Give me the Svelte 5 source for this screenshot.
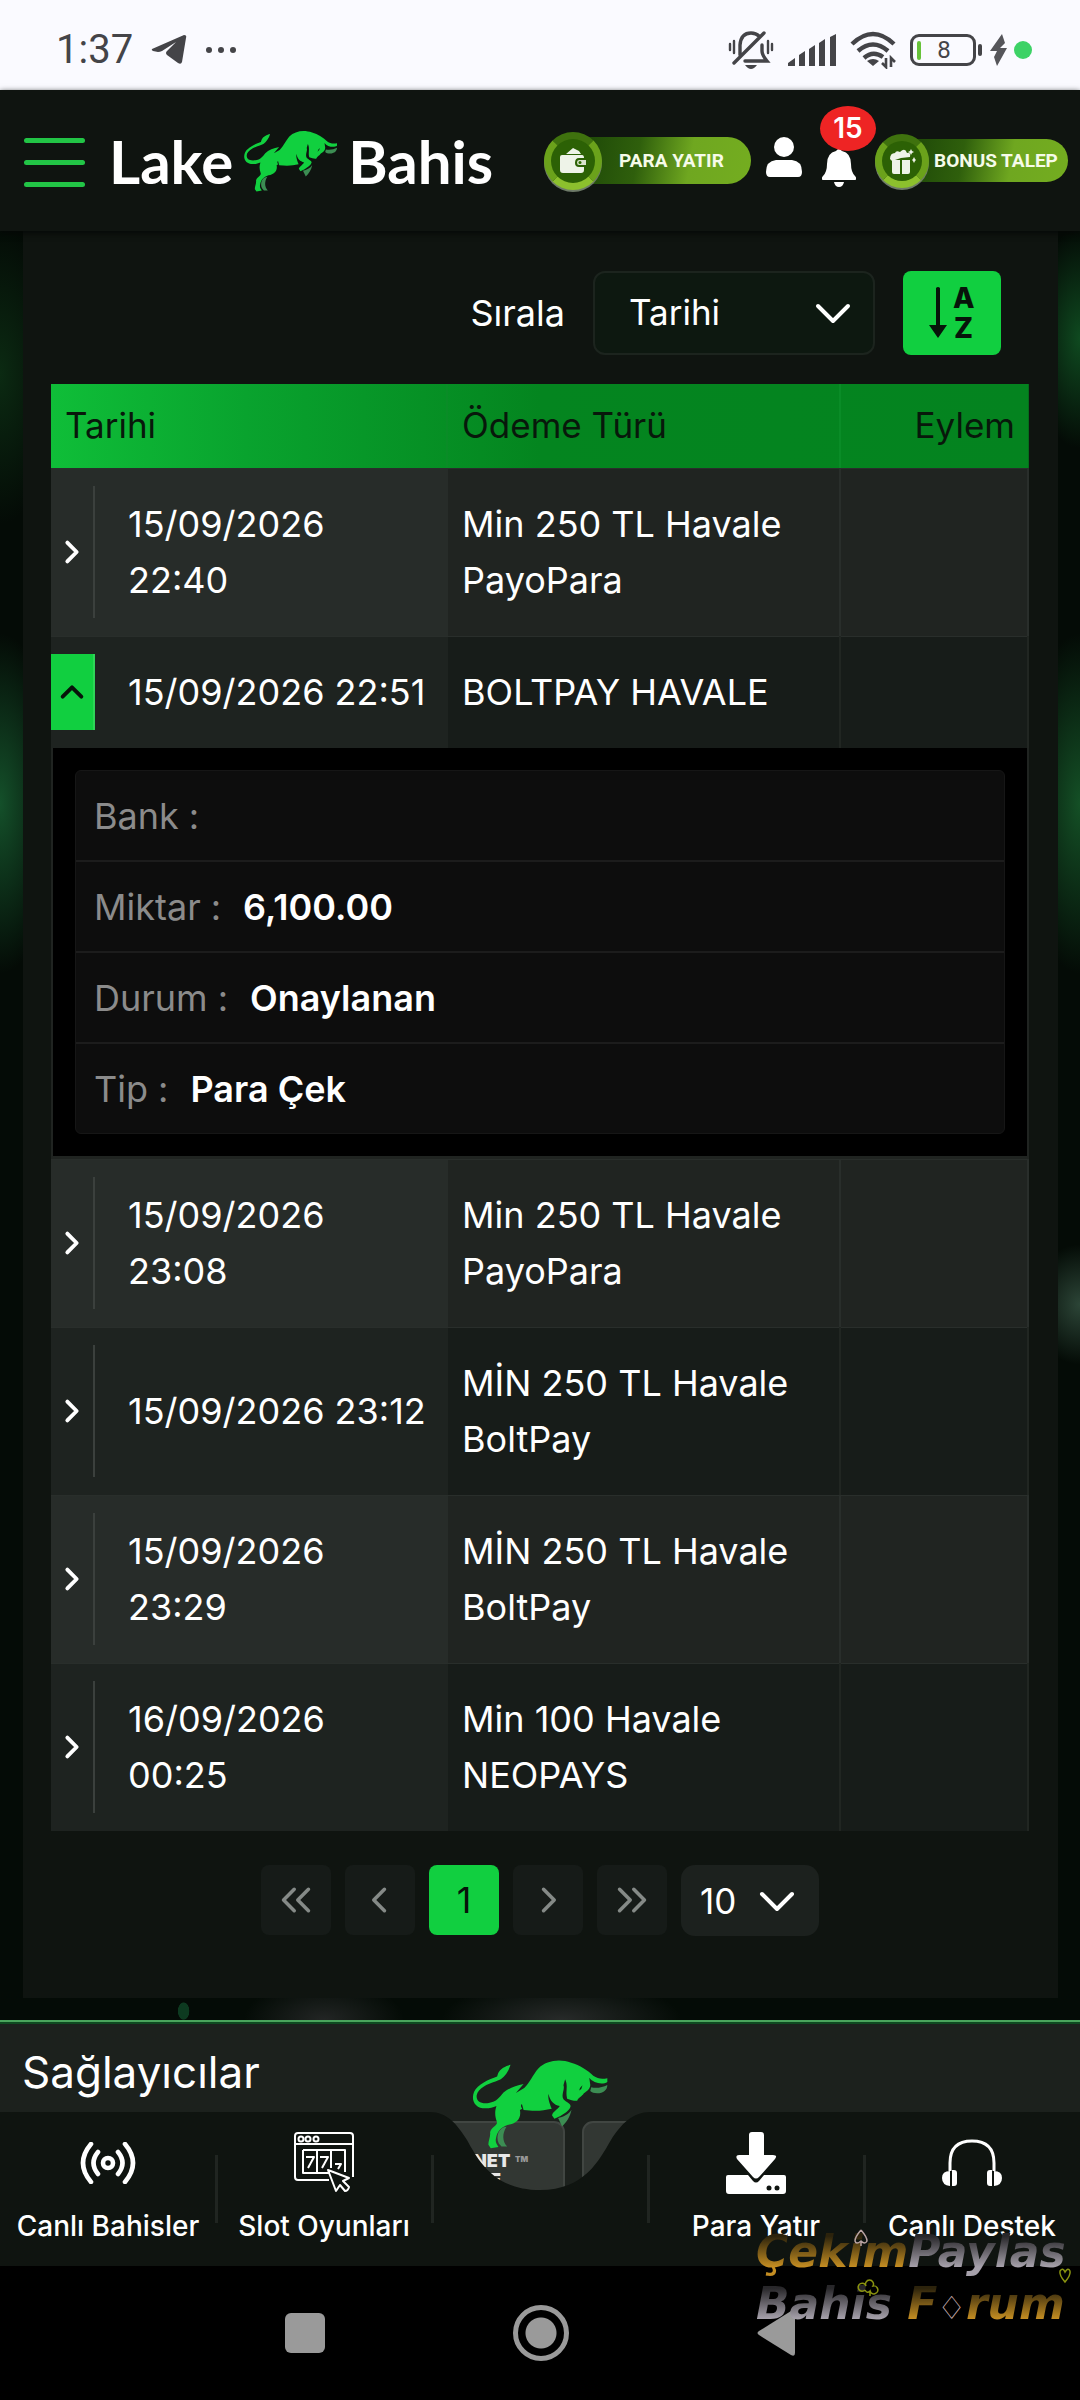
<script>
    let sortBy = $state('Tarihi');
    let pageSize = $state('10');
    let openRow = $state(1);

    const rows = [
        { date: '15/09/2026\n22:40', method: 'Min 250 TL Havale\nPayoPara' },
        {
            date: '15/09/2026 22:51',
            method: 'BOLTPAY HAVALE',
            details: [
                { label: 'Bank', value: '' },
                { label: 'Miktar', value: '6,100.00' },
                { label: 'Durum', value: 'Onaylanan' },
                { label: 'Tip', value: 'Para Çek' }
            ]
        },
        { date: '15/09/2026\n23:08', method: 'Min 250 TL Havale\nPayoPara' },
        { date: '15/09/2026 23:12', method: 'MİN 250 TL Havale\nBoltPay' },
        { date: '15/09/2026\n23:29', method: 'MİN 250 TL Havale\nBoltPay' },
        { date: '16/09/2026\n00:25', method: 'Min 100 Havale\nNEOPAYS' }
    ];

    function toggle(i) {
        openRow = openRow === i ? -1 : i;
    }
</script>

{#snippet bull()}
    <svg class="bull" viewBox="34 60 406 268" aria-hidden="true">
        <g fill="#11d03f">
            <path d="M149 77C136 80 118 88 112 102L109 112C85 120 50 136 40 158C30 184 44 207 74 207C88 207 96 204 107 200C101 218 103 232 108 246C112 258 92 262 88 278C90 292 82 304 83 316L90 326L113 322C106 312 103 306 106 294C110 276 120 263 142 256C168 252 182 236 177 212L184 208C178 200 180 196 183 194L188 212C224 216 246 214 272 208C268 198 260 180 262 164C268 186 278 196 296 200C288 212 274 218 273 228L280 238L298 230C310 222 324 214 328 202C330 192 316 190 307 180C299 166 312 150 307 138L312 120C322 140 312 158 318 178C328 182 340 185 348 184C352 174 362 172 368 162C378 156 388 148 387 136L384 116C396 132 424 138 438 128V117C424 120 410 120 396 110C380 94 356 78 330 71C296 58 256 64 232 88C216 106 206 132 190 146L165 161L188 134C164 138 142 148 128 160C116 174 108 188 84 191C58 194 46 184 48 168C52 148 80 134 104 127L120 120C134 110 144 94 149 77Z" />
        </g>
        <path d="M364 138Q362 150 354 154Q356 144 364 138Z" fill="#0a2510" />
        <g fill="#3c8d53">
            <path d="M137 262C114 264 104 290 114 312L122 321H139C124 306 124 282 137 262Z" />
            <path d="M331 211C322 226 306 232 291 236L303 261C316 248 327 232 331 211Z" />
            <path d="M390 144C406 148 424 144 438 137C438 152 426 162 408 162C398 161 392 160 387 155Z" />
        </g>
    </svg>
{/snippet}

{#snippet chevron(cls, d)}
    <svg class={cls} viewBox="0 0 36 36" fill="none" stroke="currentColor" stroke-width="4" stroke-linecap="round" stroke-linejoin="round" aria-hidden="true">
        <path {d} />
    </svg>
{/snippet}

<div class="screen">
    <div class="status">
        <span class="clock">1:37</span>
        <svg width="36" height="30" viewBox="0 0 36 30"><path d="M1 14L33 0Q36 0 35 3L31 27Q30 30 27 28L16 20Q14 18 16 16L25 7L11 16Q9 17 7 17L2 16Q0 15 1 14Z" fill="#444448" /></svg>
        <svg class="more" width="32" height="8" viewBox="0 0 32 8" fill="#444448"><circle cx="4" cy="4" r="3" /><circle cx="16" cy="4" r="3" /><circle cx="28" cy="4" r="3" /></svg>
        <div class="status-icons">
            <svg class="mute" width="46" height="40" viewBox="0 0 46 40" fill="none" stroke="#444448" stroke-width="3.4" stroke-linecap="round">
                <path d="M12 25V15Q13 3 23 3Q28 3 31 6M34 15V21Q34 25 39 31H17M6 33L36 3" />
                <path d="M2 14V20M6 11V23M44 14V20M40 11V23" stroke-width="2.4" />
                <path d="M17 35H29Q26 39 23 39Q20 39 17 35Z" fill="#444448" stroke="none" />
            </svg>
            <svg width="48" height="32" viewBox="0 0 48 32" fill="#444448"><path d="M0 32V29L7 24V32ZM11 32V21L17 17V32ZM21 32V15L27 11V32ZM31 32V9L37 5V32ZM42 32V3L48 0V32Z" /></svg>
            <svg width="46" height="38" viewBox="0 0 46 38" fill="none" stroke="#444448" stroke-width="4.4">
                <path d="M2 13Q23 -7 44 13M8 20Q23 7 38 20M14 27Q23 19 33 26" />
                <path d="M23 35L17 30Q23 26 29 30Z" fill="#444448" stroke="none" />
                <path d="M36 27V36L32 32M41 36V27L45 31" stroke-width="2.6" />
            </svg>
            <div class="battery"><i></i><span>8</span></div>
            <svg class="bolt" width="18" height="32" viewBox="0 0 18 32"><path d="M12 0L0 17H7L4 23L7 32L17 14H10L15 9Z" fill="#55555a" /></svg>
            <span class="dot"></span>
        </div>
    </div>

    <header>
        <button class="menu" aria-label="Menü"><i></i><i></i><i></i></button>
        <a class="logo" href="/">Lake{@render bull()}Bahis</a>
        <div class="actions">
            <a class="pill" href="/deposit">
                <span class="coin">
                    <svg viewBox="0 0 28 28"><path d="M7 7L14 1L20 4L22 7ZM3 8H23Q25 8 25 11H20Q16 11 16 16Q16 20 20 20H25V23Q25 26 22 26H4Q1 26 1 23V10Q1 8 3 8Z" fill="#eef3e8" /><path d="M20 13H27V18H20Q18 18 18 15.500Q18 13 20 13Z" fill="#d9e2cd" /><circle cx="21" cy="15.500" r="1.500" fill="#2d6a00" /></svg>
                </span>
                PARA YATIR
            </a>
            <button class="plain user" aria-label="Hesap">
                <svg width="36" height="42" viewBox="0 0 36 42" fill="#fff"><circle cx="18" cy="11" r="10" /><path d="M10 24H26Q36 25 36 36Q36 41 32 41H4Q0 41 0 36Q0 25 10 24Z" /></svg>
            </button>
            <button class="plain bell" aria-label="Bildirimler">
                <svg width="34" height="38" viewBox="0 0 34 38" fill="#fff"><path d="M14 2Q17 -2 20 2Q29 4 29 15Q29 23 33 27Q36 31 32 31H2Q-2 31 1 27Q5 23 5 15Q5 4 14 2ZM12 33H22Q21 38 17 38Q13 38 12 33Z" /></svg>
                <span class="badge">15</span>
            </button>
            <a class="pill bonus" href="/bonus">
                <span class="coin">
                    <svg viewBox="0 0 28 28" fill="#eef3e8"><path d="M4 13H12V27H6Q4 27 4 25ZM14 13H22V25Q22 27 20 27H14Z" /><path d="M2 12Q2 6 7 6Q8 3 12 5Q17 0 19 6Q23 5 22 10L13 11L4 14Z" /><path d="M23 2L24 4L26 5L24 6L23 8L22 6L20 5L22 4ZM26 10L27 12L28 13L27 14L26 16L25 14L24 13L25 12Z" /></svg>
                </span>
                BONUS TALEP
            </a>
        </div>
    </header>

    <main>
        <div class="panel">
            <div class="toolbar">
                <label for="sort">Sırala</label>
                <div class="select sort">
                    <select id="sort" bind:value={sortBy}>
                        <option>Tarihi</option>
                        <option>Ödeme Türü</option>
                    </select>
                    {@render chevron('arrow', 'M3 11L18 26L33 11')}
                </div>
                <button class="order" aria-label="A-Z sırala">
                    <svg width="46" height="54" viewBox="0 0 46 54" fill="#07140a">
                        <path d="M7 2Q9 0 11 2V39H18L9 52L0 39H7Z" />
                        <text x="24" y="22">A</text>
                        <text x="25" y="52">Z</text>
                    </svg>
                </button>
            </div>

            <table>
                <colgroup><col class="c1" /><col class="c2" /><col class="c3" /></colgroup>
                <thead>
                    <tr><th>Tarihi</th><th>Ödeme Türü</th><th class="right">Eylem</th></tr>
                </thead>
                <tbody>
                    {#each rows as row, i}
                        <tr class:even={i % 2 === 1}>
                            <td class="first">
                                <div class="date">
                                    <button class="expand" class:open={openRow === i} aria-label="Detay" onclick={() => toggle(i)}>
                                        {#if openRow === i}
                                            {@render chevron('mini', 'M6 24L18 12L30 24')}
                                        {:else}
                                            {@render chevron('mini', 'M12 6L24 18L12 30')}
                                        {/if}
                                    </button>
                                    <span class="lines">{row.date}</span>
                                </div>
                            </td>
                            <td class="method"><span class="lines">{row.method}</span></td>
                            <td></td>
                        </tr>
                        {#if openRow === i && row.details}
                            <tr>
                                <td class="detail" colspan="3">
                                    <dl>
                                        {#each row.details as item}
                                            <div>
                                                <dt>{item.label}<span>:</span></dt>
                                                <dd>{item.value}</dd>
                                            </div>
                                        {/each}
                                    </dl>
                                </td>
                            </tr>
                        {/if}
                    {/each}
                </tbody>
            </table>

            <div class="pager">
                <button aria-label="İlk">{@render chevron('step', 'M16 6L4 18L16 30M32 6L20 18L32 30')}</button>
                <button aria-label="Önceki">{@render chevron('step', 'M23 6L11 18L23 30')}</button>
                <button class="current">1</button>
                <button aria-label="Sonraki">{@render chevron('step', 'M13 6L25 18L13 30')}</button>
                <button aria-label="Son">{@render chevron('step', 'M4 6L16 18L4 30M20 6L32 18L20 30')}</button>
                <div class="select size">
                    <select aria-label="Sayfa boyutu" bind:value={pageSize}>
                        <option>10</option>
                        <option>20</option>
                    </select>
                    {@render chevron('arrow', 'M3 11L18 26L33 11')}
                </div>
            </div>
        </div>
    </main>

    <section class="providers"><h2>Sağlayıcılar</h2></section>

    <nav>
        <div class="bar">
            <i></i>
            <svg width="230" height="154" viewBox="0 0 230 154">
                <rect width="230" height="154" fill="#1c211d" />
                <g fill="#323733" stroke="#414642" stroke-width="2">
                    <rect x="-60" y="10" width="199" height="140" rx="10" />
                    <rect x="158" y="10" width="190" height="140" rx="10" />
                </g>
                <g class="brand"><text x="48" y="55">NET</text><text x="90" y="50" class="tm">TM</text><text x="65" y="74">E</text></g>
                <path d="M0 0H5C22 0 32 12 42 28C54 50 70 78 115 78C160 78 174 48 186 28C196 12 208 0 225 0H230V154H0Z" fill="#0f1410" />
            </svg>
            <i></i>
        </div>
        <a href="/live">
            <svg width="56" height="42" viewBox="0 0 56 42" fill="none" stroke="#fff" stroke-width="4.600" stroke-linecap="round"><circle cx="28" cy="21" r="5" /><path d="M18 10Q9 21 18 32M38 10Q47 21 38 32M11 2Q-5 21 11 40M45 2Q61 21 45 40" /></svg>
            <span>Canlı Bahisler</span>
        </a>
        <a href="/slots">
            <svg width="60" height="62" viewBox="0 0 60 62" fill="none" stroke="#fff" stroke-width="2" stroke-linejoin="round">
                <path d="M35 48H4Q1 48 1 45V4Q1 1 4 1H56Q59 1 59 4V45M1 12H59M9 18H51V40M36 41H9V18M23 18V41M37 18V36" />
                <circle cx="7" cy="7" r="2.500" /><circle cx="14" cy="7" r="2.500" /><circle cx="22" cy="7" r="2.500" />
                <path d="M12 25H20L14 36M26 25H34L28 36M41 32H47L44 37M34 38L55 46L49 49L55 55Q54 59 51 59L46 53L42 59Z" />
            </svg>
            <span>Slot Oyunları</span>
        </a>
        <a class="center" href="/" aria-label="Ana sayfa">{@render bull()}</a>
        <a href="/deposit">
            <svg width="60" height="62" viewBox="0 0 60 62"><path d="M2 43H22L27 49Q30 52 33 49L38 43H58Q60 43 60 45V59Q60 62 57 62H3Q0 62 0 59V45Q0 43 2 43Z" fill="#fff" /><path d="M23 3Q23 0 26 0H35Q38 0 38 3V23H47Q52 23 49 27L33 45Q30 48 27 45L11 27Q9 23 13 23H23Z" fill="#fff" /><circle cx="43" cy="56" r="2.500" fill="#0f1410" /><circle cx="51" cy="56" r="2.500" fill="#0f1410" /></svg>
            <span>Para Yatır</span>
        </a>
        <a href="/support">
            <svg width="60" height="48" viewBox="0 0 60 48"><path d="M8 32V24Q8 2 30 2Q52 2 52 24V32" fill="none" stroke="#fff" stroke-width="3" /><path d="M8 32V47Q0 46 0 39Q0 32 8 32ZM10 31H12Q15 31 15 34V44Q15 47 12 47H10ZM52 32V47Q60 46 60 39Q60 32 52 32ZM50 31H48Q45 31 45 34V44Q45 47 48 47H50Z" fill="#fff" /></svg>
            <span>Canlı Destek</span>
        </a>
    </nav>

    <div class="system">
        <button class="recent" aria-label="Son uygulamalar"></button>
        <button class="home" aria-label="Ana ekran"></button>
        <button class="back" aria-label="Geri">
            <svg width="38" height="46" viewBox="0 0 38 46"><path d="M2 21L34 1Q38 -1 38 3V43Q38 47 34 45L2 25Q-1 23 2 21Z" fill="#9a9a9a" /></svg>
        </button>
        <div class="watermark">
            <p><span class="gold">Çekim</span><span class="silver">Paylas</span></p>
            <p><span class="silver">Bahis</span> <span class="gold">F</span><span class="suit">♢</span><span class="gold">rum</span></p>
            <svg viewBox="0 0 324 104" width="324" height="104" fill="none" stroke-width="1.500">
                <path d="M105 4Q99 11 99 15Q100 19 105 15Q109 19 111 15Q111 11 105 4M105 15V20" stroke="#b9a3a3" />
                <path d="M109 64A4 4 0 1 1 110 60A4 4 0 1 1 117 60A4 4 0 1 1 114 65V70V65Q111 68 109 64" stroke="#8b9410" />
                <path d="M309 56Q303 49 304 45Q307 41 309 46Q312 41 314 45Q315 49 309 56Z" stroke="#8b9410" />
            </svg>
        </div>
    </div>
</div>

<style>
    :global(body) {
        margin: 0;
        background: #000;
    }
    .screen {
        font-family: Inter, 'Noto Sans', sans-serif;
        font-size: 36px;
        line-height: 56px;
        color: #fff;
        overflow: hidden;
    }
    .screen :global(svg) {
        display: block;
        flex: none;
    }
    a {
        color: inherit;
        text-decoration: none;
    }
    button,
    select {
        font: inherit;
        color: inherit;
        border: 0;
        padding: 0;
        margin: 0;
    }

    /* Status bar */
    .status {
        height: 90px;
        box-sizing: border-box;
        padding: 10px 48px 0 56px;
        display: flex;
        align-items: center;
        background: #fafaff;
        color: #444448;
        font-family: Roboto, sans-serif;
    }
    .clock {
        font-size: 40px;
        line-height: 40px;
        margin-right: 18px;
    }
    .more {
        margin-left: 18px;
    }
    .status-icons {
        margin-left: auto;
        display: flex;
        align-items: center;
        gap: 14px;
    }
    .battery {
        position: relative;
        width: 66px;
        height: 32px;
        box-sizing: border-box;
        border: 3px solid #444448;
        border-radius: 9px;
        display: flex;
        align-items: center;
        padding-left: 4px;
        margin-right: 8px;
    }
    .battery::after {
        content: '';
        position: absolute;
        right: -9px;
        top: 7px;
        width: 4px;
        height: 12px;
        border-radius: 2px;
        background: #444448;
    }
    .battery i {
        width: 4px;
        height: 19px;
        border-radius: 2px;
        background: #67c23a;
    }
    .battery span {
        flex: 1;
        text-align: center;
        font-size: 24px;
        line-height: 25px;
        margin-right: 6px;
    }
    .dot {
        width: 18px;
        height: 18px;
        margin-left: -8px;
        border-radius: 50%;
        background: #3dd266;
    }
    .bolt {
        margin-left: -8px;
    }

    /* Site header */
    header {
        position: relative;
        z-index: 1;
        height: 141px;
        box-sizing: border-box;
        padding: 0 12px 0 24px;
        display: flex;
        align-items: center;
        background: #0f1410;
        box-shadow: 0 2px 6px #050806;
    }
    .menu {
        display: flex;
        flex-direction: column;
        gap: 17px;
        background: none;
        padding-top: 4px;
        margin-right: 24px;
    }
    .menu i {
        width: 61px;
        height: 5px;
        border-radius: 3px;
        background: #22c546;
    }
    .logo {
        display: flex;
        align-items: center;
        gap: 10px;
        font-family: Lato, sans-serif;
        font-weight: 700;
        font-size: 60px;
        line-height: 72px;
    }
    .logo :global(.bull) {
        width: 95px;
        height: 62px;
    }
    .actions {
        margin-left: auto;
        display: flex;
        align-items: center;
    }
    .pill {
        display: flex;
        align-items: center;
        width: 207px;
        height: 47px;
        border-radius: 24px;
        background: linear-gradient(100deg, #1f4a08 20%, #2f5f0c 45%, #6fa720 70%, #74ad20);
        font-family: Roboto, sans-serif;
        font-weight: 700;
        font-size: 19px;
        line-height: 28px;
        color: #f6fbe9;
        white-space: nowrap;
    }
    .pill.bonus {
        width: 193px;
        height: 43px;
    }
    .coin {
        flex: none;
        width: 58px;
        height: 58px;
        box-sizing: border-box;
        padding: 8px;
        margin-right: 17px;
        border: 7px solid #6ba21b;
        border-top-color: #3f720e;
        border-bottom-color: #8cc02d;
        border-radius: 50%;
        background: #2c6105;
        box-shadow: 0 2px 0 #6e7b68;
    }
    .bonus .coin {
        width: 54px;
        height: 54px;
        padding: 6px;
        margin-right: 5px;
    }
    .plain {
        position: relative;
        background: none;
    }
    .user {
        margin: 0 20px 8px 15px;
    }
    .bell {
        margin: 14px 19px 0 0;
    }
    .badge {
        position: absolute;
        left: -2px;
        bottom: 36px;
        width: 56px;
        height: 45px;
        border-radius: 50%;
        background: #ee2424;
        font-size: 28px;
        line-height: 45px;
        font-weight: 600;
        text-align: center;
    }

    /* History panel */
    main {
        padding: 0 22px 22px 23px;
        background:
            radial-gradient(60px 170px at 0 32%, #14502a, transparent),
            radial-gradient(60px 170px at 100% 32%, #145026, transparent),
            radial-gradient(50px 60px at 100% 60%, #2c4537, transparent),
            radial-gradient(60px 150px at 0 8%, #0b2a12, transparent),
            radial-gradient(50px 110px at 100% 6%, #0f4a20, transparent),
            radial-gradient(6px 9px at 17% 99.5%, #0d3a20 90%, transparent),
            radial-gradient(80px 40px at 30% 100%, #222524, transparent),
            radial-gradient(120px 40px at 52% 100%, #272a29, transparent),
            #040b06;
    }
    .panel {
        background: #0f1410;
        padding: 40px 29px 62px 28px;
    }
    .toolbar {
        display: flex;
        justify-content: flex-end;
        align-items: center;
        gap: 28px;
        padding-right: 28px;
        margin-bottom: 29px;
    }
    .select {
        position: relative;
        box-sizing: border-box;
        display: flex;
        align-items: center;
    }
    .select select {
        appearance: none;
        width: 100%;
        height: 100%;
        background: none;
        outline: none;
    }
    .select :global(.arrow) {
        position: absolute;
        width: 36px;
        height: 36px;
        pointer-events: none;
    }
    .sort {
        width: 282px;
        height: 84px;
        border: 2px solid #1c241e;
        border-radius: 12px;
        background: #0d1810;
    }
    .sort select {
        padding: 0 0 2px 34px;
        font-size: 35px;
    }
    .sort :global(.arrow) {
        right: 22px;
    }
    .order {
        width: 98px;
        height: 84px;
        border-radius: 8px;
        background: #11cf40;
        display: flex;
        align-items: center;
        justify-content: center;
    }
    .order text {
        font-size: 28px;
        font-weight: 800;
    }

    table {
        width: 100%;
        table-layout: fixed;
        border-spacing: 0;
    }
    .c1 {
        width: 40.6%;
    }
    .c2 {
        width: 40.2%;
    }
    .c3 {
        width: 19.2%;
    }
    thead {
        background: linear-gradient(90deg, #0fbe38, #09a32e 20%, #04851f 50%, #04831f);
        color: #08180b;
    }
    th {
        height: 84px;
        box-sizing: border-box;
        padding: 0 14px 2px;
        font-size: 35px;
        font-weight: 400;
        text-align: left;
        border-right: 2px solid #0a8c27;
    }
    th.right {
        text-align: right;
        border-right: 0;
    }
    td {
        padding: 0;
        background: #202421;
        border-right: 2px solid #292e2b;
        box-shadow: inset 0 1px #292e2b;
    }
    .even td {
        background: #171c19;
        border-right-color: #212622;
    }
    td.first {
        height: 1px;
        background: #272c29;
        border-right: 0;
    }
    .even td.first {
        background: #1e2320;
    }
    .date {
        height: 100%;
        box-sizing: border-box;
        padding: 18px 0;
        display: flex;
        align-items: stretch;
    }
    .date .lines {
        align-self: center;
        padding-left: 33px;
    }
    .lines {
        display: block;
        white-space: pre;
    }
    .expand {
        flex: none;
        width: 44px;
        box-sizing: border-box;
        background: none;
        border-right: 2px solid #3b403d;
        display: flex;
        align-items: center;
        justify-content: center;
    }
    .expand.open {
        background: #11cf40;
        border-color: #2fd458;
        color: #07140a;
    }
    .expand :global(.mini) {
        width: 28px;
        height: 28px;
        stroke-width: 5px;
    }
    .method {
        padding: 28px 14px;
    }
    td.detail {
        padding: 22px;
        background: #000;
        border: 2px solid #202421;
        border-top: 0;
        border-bottom-width: 3px;
        box-shadow: none;
    }
    dl {
        margin: 0;
        border: 1px solid #161616;
        border-radius: 6px;
        background: #0d0d0d;
    }
    dl div {
        display: flex;
        gap: 22px;
        height: 89px;
        align-items: center;
        padding: 0 18px;
        border-bottom: 2px solid #1c1c1c;
    }
    dl div:last-child {
        border-bottom: 0;
    }
    dt {
        color: #8b8b8b;
    }
    dt span {
        margin-left: 10px;
    }
    dd {
        margin: 0;
        font-weight: 600;
    }

    .pager {
        display: flex;
        justify-content: center;
        gap: 14px;
        margin-top: 34px;
    }
    .pager button {
        width: 70px;
        height: 70px;
        border-radius: 8px;
        background: #161b18;
        color: #858a87;
        display: flex;
        align-items: center;
        justify-content: center;
    }
    .pager button.current {
        background: #11cf40;
        color: #07140a;
    }
    .pager :global(.step) {
        width: 32px;
        height: 32px;
    }
    .size {
        width: 138px;
        height: 71px;
        border-radius: 14px;
        background: #1c211e;
    }
    .size select {
        padding-left: 19px;
        font-size: 35px;
    }
    .size :global(.arrow) {
        right: 24px;
    }

    /* Footer */
    .providers {
        border-top: 2px solid #4aa45c;
        box-shadow: inset 0 2px #0e4a20;
        background: #1c211d;
    }
    h2 {
        margin: 0;
        padding: 22px 22px 12px;
        font-size: 44px;
        line-height: 56px;
        font-weight: 400;
    }
    nav {
        position: relative;
        height: 154px;
        display: grid;
        grid-template-columns: repeat(5, 1fr);
    }
    .bar {
        position: absolute;
        inset: 0;
        display: flex;
    }
    .bar i {
        flex: 1;
        background: #0f1410;
    }
    .brand {
        fill: #e8e8e8;
        font-size: 18px;
        font-weight: 900;
    }
    .tm {
        font-size: 8px;
        fill: #999;
    }
    nav a {
        position: relative;
        box-sizing: border-box;
        padding-top: 18px;
        display: grid;
        grid-template-rows: 66px 60px;
        place-items: center;
        align-content: start;
        font-size: 28px;
        line-height: 32px;
        font-weight: 500;
        white-space: nowrap;
    }
    nav a:not(:last-child)::after {
        content: '';
        position: absolute;
        right: -2px;
        top: 43px;
        width: 3px;
        height: 68px;
        background: #202521;
    }
    .center :global(.bull) {
        position: absolute;
        left: 40px;
        top: -53px;
        width: 136px;
        height: 90px;
    }

    .system {
        position: relative;
        height: 133px;
        display: flex;
        justify-content: center;
        align-items: center;
        gap: 188px;
        background: #000;
    }
    .recent {
        width: 40px;
        height: 40px;
        border-radius: 6px;
        background: #9a9a9a;
    }
    .home {
        width: 56px;
        height: 56px;
        border: 5px solid #9a9a9a;
        border-radius: 50%;
        background: radial-gradient(circle, #9a9a9a 15px, transparent 16px);
    }
    .back {
        background: none;
    }
    .watermark {
        position: absolute;
        right: 0;
        top: -40px;
        width: 324px;
        font-family: 'DejaVu Sans', sans-serif;
        font-style: italic;
        font-weight: 700;
        font-size: 44px;
        line-height: 52px;
        white-space: nowrap;
        pointer-events: none;
    }
    .watermark p {
        margin: 0;
    }
    .watermark svg {
        position: absolute;
        left: 0;
        top: 0;
    }
    .gold,
    .silver {
        background: linear-gradient(#2c230c 20%, #c48d22 80%);
        background-clip: text;
        color: transparent;
    }
    .silver {
        background-image: linear-gradient(#28272a 20%, #a6a1ab 80%);
    }
    .suit {
        color: #c7aeae;
        font-weight: 400;
        font-size: 32px;
        font-style: normal;
    }
</style>
